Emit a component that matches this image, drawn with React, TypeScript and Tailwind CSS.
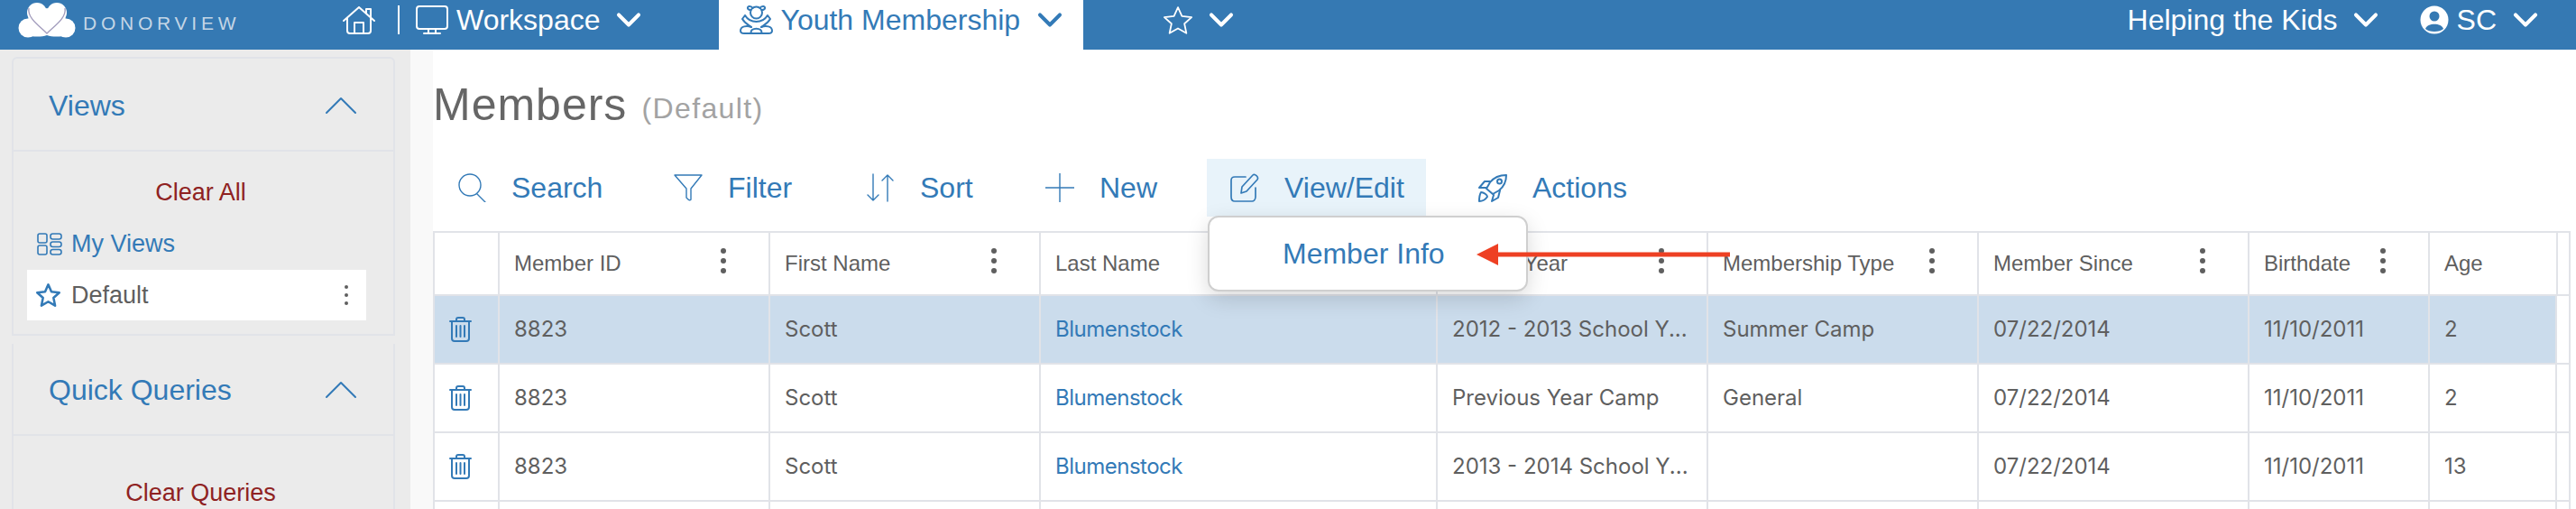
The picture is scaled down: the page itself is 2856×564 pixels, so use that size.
import { ChevronDown, ChevronUp } from 'lucide-react';

const blue = 'text-[#337ab7]';

function Logo() {
  return (
    <svg width="64" height="39" viewBox="0 0 64 39" fill="#fff">
      <circle cx="11" cy="28" r="10.5" />
      <circle cx="53" cy="28" r="10.5" />
      <circle cx="21" cy="11" r="11" />
      <circle cx="43" cy="11" r="11" />
      <path d="M12 14 L32 6 L52 14 L56 36 C46 38 38 38 32 36 C26 38 18 38 8 36 Z" />
      <path d="M12 6 C10 17 24 26 32 34 C40 26 54 17 52 6" fill="none" stroke="#a39dbd" strokeWidth="1.4" />
    </svg>
  );
}

function Outline({ w, h, box, sw = 2, children }: { w: number; h: number; box: string; sw?: number; children: React.ReactNode }) {
  return (
    <svg width={w} height={h} viewBox={box} fill="none" stroke="currentColor" strokeWidth={sw} strokeLinecap="round" strokeLinejoin="round" className="shrink-0">
      {children}
    </svg>
  );
}

function Teddy() {
  return (
    <Outline w={37} h={32} box="0 0 37 32">
      <circle cx="18.5" cy="8" r="6.5" />
      <path d="M12.5 5 C8 5 8 1 11 1 C13 1 14 2 14.5 3 M24.5 5 C29 5 29 1 26 1 C24 1 23 2 22.5 3" />
      <path d="M6 11 C9 16 14 18 18.5 18 C23 18 28 16 31 11 L34 15 C31 20 27 22 24 24 M3 15 L6 11 M3 15 C6 20 10 22 13 24" />
      <path d="M13 24 C8 22 1 23 1 28 C1 31 3 31 5 31 H32 C34 31 36 31 36 28 C36 23 29 22 24 24" />
      <path d="M13 31 C10 24 27 24 24 31" />
    </Outline>
  );
}

function Rocket() {
  return (
    <Outline w={32} h={31} box="0 0 32 31">
      <path d="M31 1 C23 1 17 4 13 9 L9 16 L16 22 L23 18 C28 14 31 9 31 1 Z" />
      <circle cx="23.5" cy="8" r="2.5" />
      <path d="M13 8 H7 L1 15 H9" />
      <path d="M17 23 L15 30 L22 26 L24 18" />
      <path d="M3 20 C1 23 1 27 1 30 C5 30 8 28 10 25 C10 23 6 20 3 20 Z" />
    </Outline>
  );
}

function Trash() {
  return (
    <Outline w={25} h={28} box="0 0 25 28">
      <path d="M1 5 H24 M8 5 V3 C8 1.5 9 1 10 1 H15 C16 1 17 1.5 17 3 V5" />
      <path d="M3 5 V24 C3 26 4 27 6 27 H19 C21 27 22 26 22 24 V5" />
      <path d="M8 10 V22 M12.5 10 V22 M17 10 V22" />
    </Outline>
  );
}

function Dots({ small }: { small?: boolean }) {
  const dot = small ? 'block size-[4px] rounded-full bg-[#5f5f5f]' : 'block size-[6px] rounded-full bg-[#5f5f5f]';
  return (
    <div className="flex flex-col gap-[5px]">
      <span className={dot} />
      <span className={dot} />
      <span className={dot} />
    </div>
  );
}

function Chev({ className }: { className: string }) {
  return <ChevronDown size={44} strokeWidth={2.2} className={`shrink-0 ${className}`} />;
}

function TopBar() {
  return (
    <div className="flex h-[55px] items-stretch bg-[#3579b3] text-[32px] text-white">
      <div className="ml-[20px] flex w-[64px] items-center pb-[10px]"><Logo /></div>
      <span className="ml-[8px] w-[270px] self-center pb-[4px] text-[21px] font-medium tracking-[4.75px] text-[#c4d6e6]">DONORVIEW</span>
      <div className="ml-[18px] flex items-center pb-[11px]">
        <Outline w={36} h={31} box="0 0 36 31">
          <path d="M1 16 L18 1 L35 16 M5 13 V27 C5 29 6 30 8 30 H28 C30 30 31 29 31 27 V13 M13 30 V18 H23 V30 M26 7 V3 H31 V12" />
        </Outline>
        <span className="ml-[25px] h-[32px] w-[2px] bg-white" />
        <span className="ml-[18px]">
          <Outline w={36} h={32} box="0 0 36 32">
            <rect x="1" y="1" width="34" height="25" rx="3" />
            <path d="M14 26 V31 M22 26 V31 M9 31 H27" />
          </Outline>
        </span>
        <span className="ml-[9px] leading-[44px]">Workspace</span>
        <Chev className="ml-[10px]" />
      </div>
      <div className="ml-[78px] flex w-[404px] items-center bg-white pb-[11px] pl-[23px] text-[#337ab7]">
        <Teddy />
        <span className="ml-[8px]">Youth Membership</span>
        <Chev className="ml-[11px]" />
      </div>
      <div className="ml-[88px] flex items-center pb-[11px]">
        <svg width="34" height="33" viewBox="0 0 24 24" fill="none" stroke="currentColor" strokeWidth="1.3" strokeLinejoin="round">
          <path d="M12 1.5 L15.2 8.6 L23 9.5 L17.2 14.7 L18.8 22.4 L12 18.5 L5.2 22.4 L6.8 14.7 L1 9.5 L8.8 8.6 Z" />
        </svg>
        <Chev className="ml-[9px]" />
      </div>
      <div className="ml-auto flex items-center pb-[11px] pr-[34px]">
        <span>Helping the Kids</span>
        <Chev className="ml-[9px]" />
        <svg width="34" height="32" viewBox="0 0 34 32" className="ml-[37px]">
          <circle cx="17" cy="16" r="15.5" fill="#fff" />
          <circle cx="17" cy="12" r="5.5" fill="#3579b3" />
          <path d="M7 26 C9 19 25 19 27 26 C23 30 11 30 7 26 Z" fill="#3579b3" />
        </svg>
        <span className="ml-[8px]">SC</span>
        <Chev className="ml-[10px]" />
      </div>
    </div>
  );
}

function PanelHead({ title, height }: { title: string; height: string }) {
  return (
    <div className={`flex items-center justify-between border-b-2 border-[#e1e3e8] pl-[39px] pr-[26px] text-[32px] text-[#337ab7] ${height}`}>
      <span className="mt-[2px]">{title}</span>
      <ChevronUp size={64} strokeWidth={0.75} className="mt-[2px]" />
    </div>
  );
}

function Sidebar() {
  return (
    <aside className="flex w-[455px] shrink-0 flex-col gap-[9px] bg-[#ebebeb] pl-[13px] pr-[17px] pt-[8px]">
      <div className="h-[309px] shrink-0 rounded-t-[6px] border-2 border-[#e1e3e8]">
        <PanelHead title="Views" height="h-[103px]" />
        <div className="pr-[6px] pt-[27px] text-center text-[27px] leading-[36px] text-[#8f2222]">Clear All</div>
        <div className="mt-[21px] flex items-center pl-[26px] text-[27px] leading-[36px] text-[#337ab7]">
          <svg width="28" height="25" viewBox="0 0 28 25" fill="none" stroke="currentColor" strokeWidth="1.6" className="shrink-0">
            <rect x="1" y="1" width="10" height="10" rx="2" />
            <rect x="15" y="1" width="12" height="6" rx="2.5" />
            <rect x="15" y="10" width="12" height="5.5" rx="2.5" />
            <rect x="1" y="14" width="10" height="10" rx="2" />
            <rect x="15" y="18.5" width="12" height="5.5" rx="2.5" />
          </svg>
          <span className="ml-[10px]">My Views</span>
        </div>
        <div className="ml-[15px] mt-[11px] flex h-[56px] w-[376px] items-center justify-between bg-white pl-[9px] pr-[20px] text-[27px] text-[#5f5f5f]">
          <div className="flex items-center">
            <svg width="29" height="28" viewBox="0 0 24 24" fill="none" stroke="#337ab7" strokeWidth="2.2" strokeLinejoin="round">
              <path d="M12 2 L15 8.8 L22.5 9.6 L17 14.6 L18.5 22 L12 18.2 L5.5 22 L7 14.6 L1.5 9.6 L9 8.8 Z" />
            </svg>
            <span className="ml-[11px]">Default</span>
          </div>
          <Dots small />
        </div>
      </div>
      <div className="h-[300px] shrink-0 border-x-2 border-[#e1e3e8]">
        <PanelHead title="Quick Queries" height="h-[102px]" />
        <div className="pr-[6px] pt-[45px] text-center text-[27px] leading-[36px] text-[#8f2222]">Clear Queries</div>
      </div>
    </aside>
  );
}

function ToolItem({ icon, label, active, width }: { icon: React.ReactNode; label: string; active?: boolean; width: string }) {
  return (
    <div className={`flex h-[64px] items-center ${width} ${active ? 'bg-[#e8f3fa] pl-[26px]' : ''}`}>
      <span className="flex w-[32px] justify-center">{icon}</span>
      <span className="ml-[28px]">{label}</span>
    </div>
  );
}

const columns = [
  { title: 'Member ID', width: 'w-[300px]' },
  { title: 'First Name', width: 'w-[300px]' },
  { title: 'Last Name', width: 'w-[440px]' },
  { title: 'School Year', width: 'w-[300px]' },
  { title: 'Membership Type', width: 'w-[300px]' },
  { title: 'Member Since', width: 'w-[300px]' },
  { title: 'Birthdate', width: 'w-[200px]' },
];

const rows = [
  { id: '8823', first: 'Scott', last: 'Blumenstock', year: '2012 - 2013 School Y...', type: 'Summer Camp', since: '07/22/2014', birth: '11/10/2011', age: '2' },
  { id: '8823', first: 'Scott', last: 'Blumenstock', year: 'Previous Year Camp', type: 'General', since: '07/22/2014', birth: '11/10/2011', age: '2' },
  { id: '8823', first: 'Scott', last: 'Blumenstock', year: '2013 - 2014 School Y...', type: '', since: '07/22/2014', birth: '11/10/2011', age: '13' },
  { id: '', first: '', last: '', year: '', type: '', since: '', birth: '', age: '' },
];

function Cell({ width, link, children }: { width: string; link?: boolean; children?: React.ReactNode }) {
  return (
    <div className={`flex h-full items-center border-r-2 border-[#e1e3e8] pl-[16px] ${width} ${link ? 'tracking-[-0.5px] text-[#337ab7]' : ''}`}>
      {children}
    </div>
  );
}

function Table() {
  return (
    <div className="mt-[16px] w-[2370px] border-x-2 border-t-2 border-[#e1e3e8] text-[24px]">
      <div className="flex h-[70px] border-b-2 border-[#e1e3e8] text-[#5f5f5f]">
        <div className="h-full w-[72px] border-r-2 border-[#e1e3e8]" />
        {columns.map((col) => (
          <div key={col.title} className={`flex h-full items-center justify-between border-r-2 border-[#e1e3e8] pl-[16px] pr-[47px] ${col.width}`}>
            <span>{col.title}</span>
            <div className="-mt-[6px]"><Dots /></div>
          </div>
        ))}
        <div className="flex h-full w-[142px] items-center border-r-2 border-[#e1e3e8] pl-[16px]">
          <span>Age</span>
        </div>
      </div>
      {rows.map((row, i) => (
        <div key={i} className="flex h-[76px] border-b-2 border-[#e1e3e8] font-['Inter',sans-serif] text-[#5f5f5f]">
          <div className={`flex w-[2353px] ${i === 0 ? 'bg-[#cbdcec]' : ''}`}>
            <div className={`flex h-full w-[72px] items-center justify-center border-r-2 border-[#e1e3e8] pr-[14px] ${blue}`}>
              {row.id && <Trash />}
            </div>
            <Cell width="w-[300px]">{row.id}</Cell>
            <Cell width="w-[300px]">{row.first}</Cell>
            <Cell width="w-[440px]" link>{row.last}</Cell>
            <Cell width="w-[300px]">{row.year}</Cell>
            <Cell width="w-[300px]">{row.type}</Cell>
            <Cell width="w-[300px]">{row.since}</Cell>
            <Cell width="w-[200px]">{row.birth}</Cell>
            <Cell width="w-[141px]">{row.age}</Cell>
          </div>
        </div>
      ))}
    </div>
  );
}

function Main() {
  return (
    <main className="relative min-w-0 flex-1 bg-white">
      <div className="flex items-baseline pt-[33px] text-[#666]">
        <span className="text-[50px] leading-[56px] tracking-[1px]">Members</span>
        <span className="ml-[16px] -translate-y-[2px] text-[32px] tracking-[1.4px] text-[#a3a3a3]">(Default)</span>
      </div>
      <div className={`ml-[27px] mt-[30px] flex items-center text-[32px] ${blue}`}>
        <ToolItem width="w-[240px]" label="Search" icon={
          <Outline w={32} h={32} box="0 0 32 32" sw={1.4}>
            <circle cx="14" cy="13" r="12" />
            <path d="M22 23 L31 32" />
          </Outline>
        } />
        <ToolItem width="w-[213px]" label="Filter" icon={
          <Outline w={32} h={30} box="0 0 32 30" sw={1.4}>
            <path d="M1 1 H31 L19 16 V28 C19 29 17 29 16 28 L14 26 V16 Z" />
          </Outline>
        } />
        <ToolItem width="w-[199px]" label="Sort" icon={
          <Outline w={32} h={32} box="0 0 32 32" sw={1.4}>
            <path d="M8 1 V30 M2 24 L8 30 L14 24 M24 31 V2 M18 8 L24 2 L30 8" />
          </Outline>
        } />
        <ToolItem width="w-[179px]" label="New" icon={
          <Outline w={32} h={32} box="0 0 32 32" sw={1.4}>
            <path d="M16 0 V32 M0 16 H32" />
          </Outline>
        } />
        <ToolItem active width="w-[243px]" label="View/Edit" icon={
          <Outline w={32} h={32} box="0 0 32 32" sw={1.7}>
            <path d="M17 4 H5 C2 4 1 5 1 8 V26 C1 29 2 31 5 31 H24 C26 31 28 29 28 26 V16" />
            <path d="M12 22 L13 15 L25 2 C27 0 32 4 30 7 L18 20 Z" />
          </Outline>
        } />
        <div className="ml-[58px]">
          <ToolItem width="w-[200px]" label="Actions" icon={<Rocket />} />
        </div>
      </div>
      <Table />

      <div className="absolute left-[859px] top-[184px] flex h-[84px] w-[355px] items-center rounded-[12px] border-2 border-[#cfcfcf] bg-white pl-[81px] text-[32px] shadow-[0_8px_24px_rgba(0,0,0,0.15)]">
        <span className={blue}>Member Info</span>
      </div>
      {/* callout arrow over the menu */}
      <svg width="282" height="26" viewBox="0 0 282 26" className="absolute left-[1157px] top-[214px]">
        <path d="M0 13 L24 1 V10.5 H281 V15.5 H24 V25 Z" fill="#ee4023" />
      </svg>
    </main>
  );
}

export default function App() {
  return (
    <div className="h-[564px] w-[2856px] overflow-hidden bg-white font-['Liberation_Sans',sans-serif]">
      <TopBar />
      <div className="flex h-[509px]">
        <Sidebar />
        <div className="w-[25px] shrink-0 bg-[#f9f9f9]" />
        <Main />
      </div>
    </div>
  );
}
